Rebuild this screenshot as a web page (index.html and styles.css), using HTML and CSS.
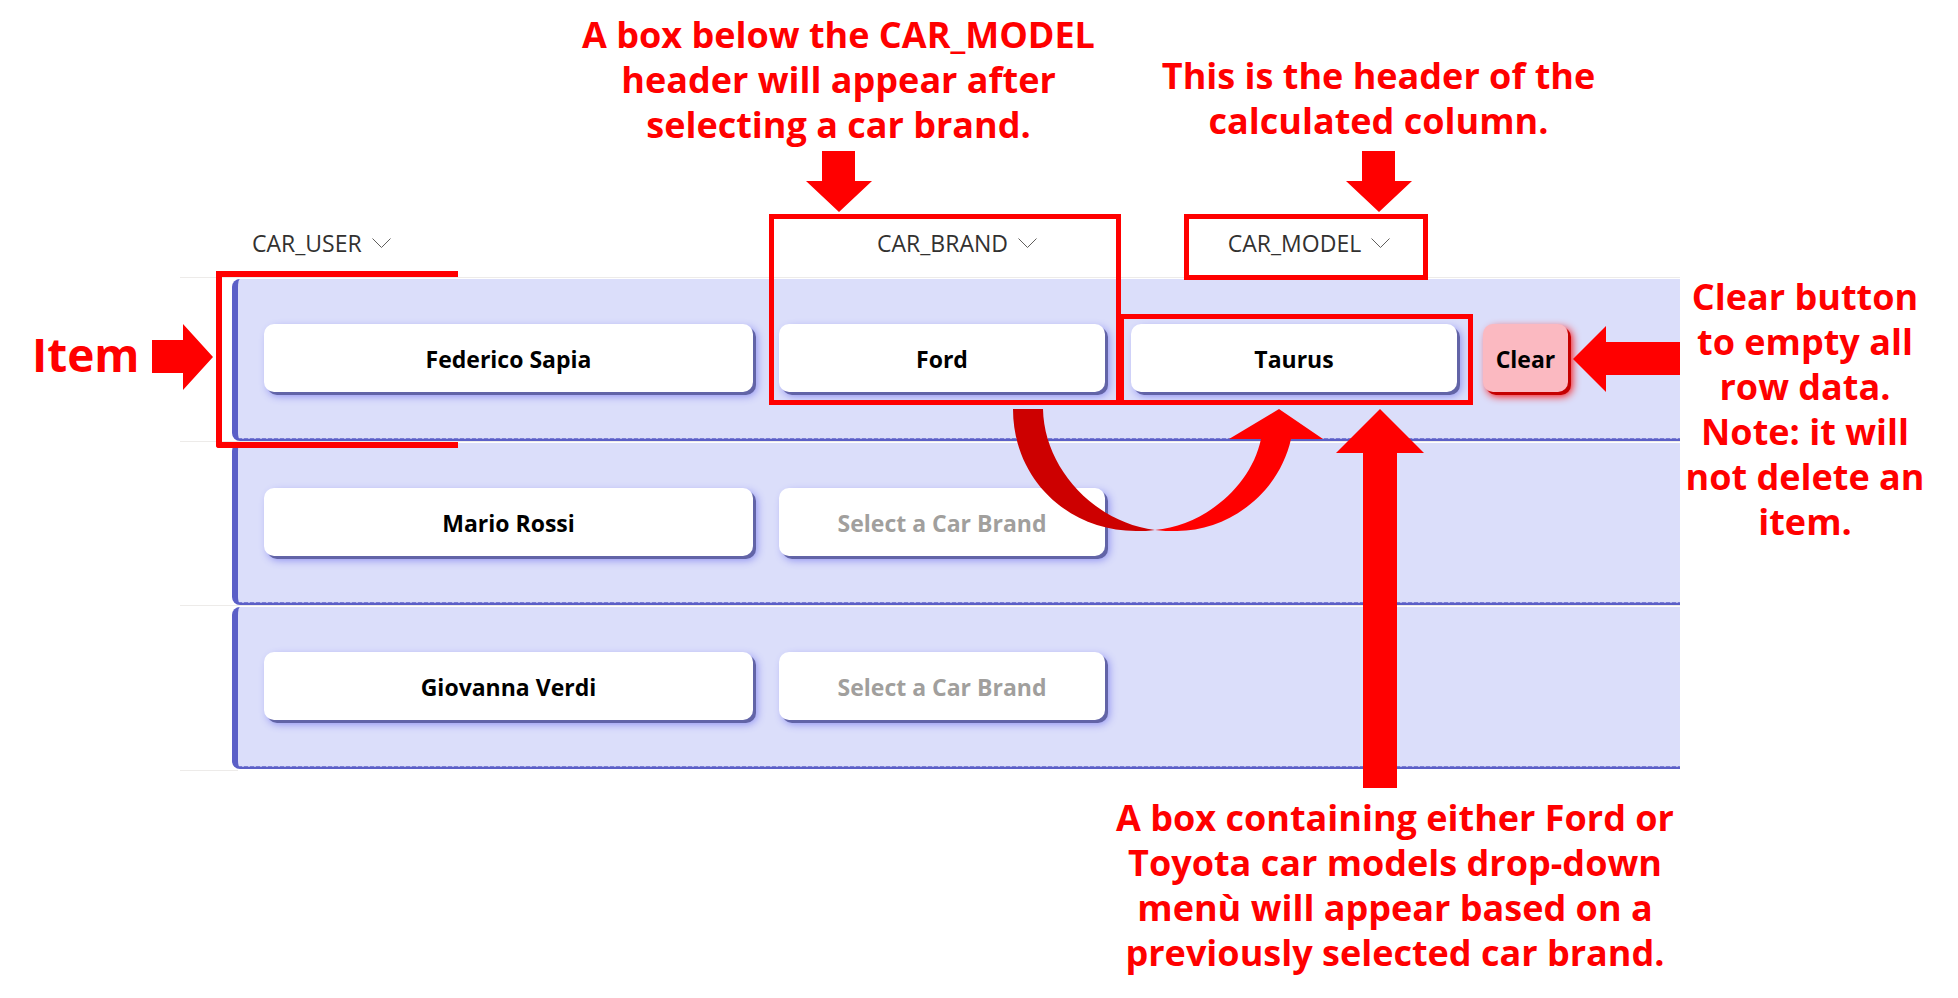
FILE: index.html
```html
<!DOCTYPE html>
<html lang="en">
<head>
<meta charset="utf-8">
<title>Car list guide</title>
<link rel="stylesheet" href="styles.css">
</head>
<body>
<main class="page">
  <section class="notes-top">
    <div class="note note-brand">
      <p>A box below the CAR_MODEL<br>header will appear after<br>selecting a car brand.</p>
      <svg class="arrow" width="66" height="61" viewBox="0 0 66 61" aria-hidden="true"><path d="M16 0H49V30H66L33 61L0 30H16Z"/></svg>
    </div>
    <div class="note note-model">
      <p>This is the header of the<br>calculated column.</p>
      <svg class="arrow" width="66" height="61" viewBox="0 0 66 61" aria-hidden="true"><path d="M16 0H49V30H66L33 61L0 30H16Z"/></svg>
    </div>
  </section>

  <aside class="note-item">
    <p>Item</p>
    <svg class="arrow" width="61" height="66" viewBox="0 0 61 66" aria-hidden="true"><path d="M0 16V49H31V66L61 33L31 0V16Z"/></svg>
  </aside>

  <table class="list">
    <thead>
      <tr class="head">
        <th class="head-user" scope="col">CAR_USER <svg class="chevron" width="19" height="11" viewBox="0 0 19 11" aria-hidden="true"><path d="M0.5 0.5L9.5 9.5L18.5 0.5"/></svg></th>
        <th scope="col">CAR_BRAND <svg class="chevron" width="19" height="11" viewBox="0 0 19 11" aria-hidden="true"><path d="M0.5 0.5L9.5 9.5L18.5 0.5"/></svg></th>
        <th class="head-model" scope="col">CAR_MODEL <svg class="chevron" width="19" height="11" viewBox="0 0 19 11" aria-hidden="true"><path d="M0.5 0.5L9.5 9.5L18.5 0.5"/></svg><span class="mark mark-head"></span></th>
      </tr>
    </thead>
    <tbody>
      <tr class="row">
        <td><button class="field" type="button">Federico Sapia</button><span class="bracket"></span></td>
        <td><button class="field" type="button">Ford</button><span class="mark mark-brand"></span></td>
        <td>
          <button class="field" type="button">Taurus</button><span class="mark mark-model"></span>
          <svg class="arrow arrow-curve" width="311" height="123" viewBox="0 0 311 123" aria-hidden="true">
            <path class="curve-dark" d="M0 0H30C31 58 80 113 142 121C136 122 130 122 123 122C55 122 0 70 0 0Z"/>
            <path d="M142 121C190 117 238 78 248 30H216L266 0L310 30H278C266 84 216 122 164 122C156 122 149 122 142 121Z"/>
          </svg>
          <svg class="arrow arrow-up" width="88" height="379" viewBox="0 0 88 379" aria-hidden="true"><path d="M44 0L88 44H61V379H27V44H0Z"/></svg>
        </td>
        <td>
          <button class="field field-clear" type="button">Clear</button>
          <svg class="arrow arrow-clear" width="107" height="66" viewBox="0 0 107 66" aria-hidden="true"><path d="M0 33L33 0V16H107V49H33V66Z"/></svg>
        </td>
      </tr>
      <tr class="row">
        <td><button class="field" type="button">Mario Rossi</button></td>
        <td><button class="field field-empty" type="button">Select a Car Brand</button></td>
      </tr>
      <tr class="row">
        <td><button class="field" type="button">Giovanna Verdi</button></td>
        <td><button class="field field-empty" type="button">Select a Car Brand</button></td>
      </tr>
    </tbody>
  </table>

  <aside class="note note-clear">
    <p>Clear button<br>to empty all<br>row data.<br>Note: it will<br>not delete an<br>item.</p>
  </aside>

  <section class="note note-box">
    <p>A box containing either Ford or<br>Toyota car models drop-down<br>menù will appear based on a<br>previously selected car brand.</p>
  </section>
</main>
</body>
</html>
```
FILE: styles.css
```css
* {
  box-sizing: border-box;
}

body {
  margin: 0;
  background: #fff;
  font-family: "Open Sans", "Noto Sans", sans-serif;
}

p {
  margin: 0;
}

.page {
  display: grid;
  grid-template-columns: 180px minmax(0, 1fr) 278px;
}

.arrow {
  display: block;
  flex: none;
  fill: #f00;
}

/* Callouts */
.note {
  color: #f00;
  font-size: 36px;
  font-weight: 700;
  line-height: 45px;
  text-align: center;
  white-space: nowrap;
}

.notes-top {
  grid-column: 2;
  display: grid;
  grid-template-columns: 556fr 522fr;
  align-items: end;
  padding: 12px 40px 0 380px;
}

.note-brand,
.note-model {
  display: flex;
  flex-direction: column;
  align-items: center;
  gap: 4px;
}

.note-model {
  gap: 8px;
}

.note-item {
  grid-column: 1;
  grid-row: 2;
  position: relative;
  z-index: 1;
  display: flex;
  align-items: center;
  align-self: start;
  gap: 12px;
  margin-top: 112px;
  padding-left: 32px;
  color: #f00;
  font-size: 46px;
  font-weight: 700;
  line-height: 60px;
}

.note-item p {
  padding-bottom: 6px;
}

.note-clear {
  grid-column: 3;
  grid-row: 2;
  padding: 62px 28px 0 0;
}

.note-box {
  grid-column: 2;
  padding: 24px 0 0 930px;
}

/* List */
.list {
  grid-column: 2;
  grid-row: 2;
  display: block;
}

.list thead,
.list tbody {
  display: block;
  padding-left: 52px;
}

.head,
.row {
  display: grid;
  column-gap: 26px;
}

.head {
  grid-template-columns: 516fr 326fr 326fr 85px;
  height: 66px;
  padding: 0 97px 0 20px;
}

.head th {
  position: relative;
  display: flex;
  align-items: center;
  justify-content: center;
  gap: 10px;
  padding: 0 0 4px;
  color: #323130;
  font-size: 23px;
  font-weight: 400;
}

.head .head-user {
  justify-content: flex-start;
}

.chevron {
  fill: none;
  stroke: #605e5c;
}

.row {
  position: relative;
  grid-template-columns: 489fr 326fr 326fr 85px;
  margin-bottom: 2px;
  padding: 45px 112px 47px 26px;
  border-left: 6px solid #5b5fc7;
  border-bottom: 2px solid #5b5fc7;
  border-radius: 8px 0 0 8px;
  background: repeating-linear-gradient(90deg, #7a7dd4 0 4px, #b5b8ec 4px 6px) bottom / 100% 1px no-repeat padding-box, #dbdefa;
}

.row:first-child {
  margin-top: 1px;
}

.row::before,
.row:last-child::after {
  content: "";
  position: absolute;
  left: -58px;
  right: 0;
  top: -2px;
  height: 1px;
  background: #edebe9;
}

.row:last-child::after {
  top: auto;
  right: 100%;
  bottom: -4px;
}

.row td {
  position: relative;
  padding: 0;
}

.field {
  display: block;
  width: 100%;
  height: 68px;
  padding: 2px 0 0;
  border: 0;
  border-radius: 10px;
  background: #fff;
  box-shadow: 3px 3px 0 #6264a7, 4px 4px 8px #8b8cf0;
  color: #000;
  font: inherit;
  font-size: 23px;
  font-weight: 700;
}

.field-empty {
  color: #a19f9d;
}

.field-clear {
  background: #fbb9c1;
  box-shadow: 3px 3px 0 #c50000, 4px 4px 8px #f00;
}

/* Outlines and arrows drawn over the list */
.mark,
.bracket {
  position: absolute;
  z-index: 2;
  border: 5px solid #f00;
  pointer-events: none;
}

.mark-head {
  inset: 2px 44px -2px 38px;
}

.mark-brand {
  inset: -110px -16px -13px -10px;
}

.mark-model {
  inset: -10px -16px -13px -12px;
}

.bracket {
  left: -48px;
  top: -53px;
  width: 242px;
  height: 177px;
  border-width: 6px 0 6px 6px;
  border-radius: 0 0 0 3px;
}

.arrow-curve,
.arrow-up,
.arrow-clear {
  position: absolute;
  z-index: 3;
  top: 85px;
}

.arrow-curve {
  left: -118px;
}

.arrow-up {
  left: 205px;
}

.arrow-clear {
  top: 2px;
  left: 90px;
}

.curve-dark {
  fill: #cd0000;
}
```
